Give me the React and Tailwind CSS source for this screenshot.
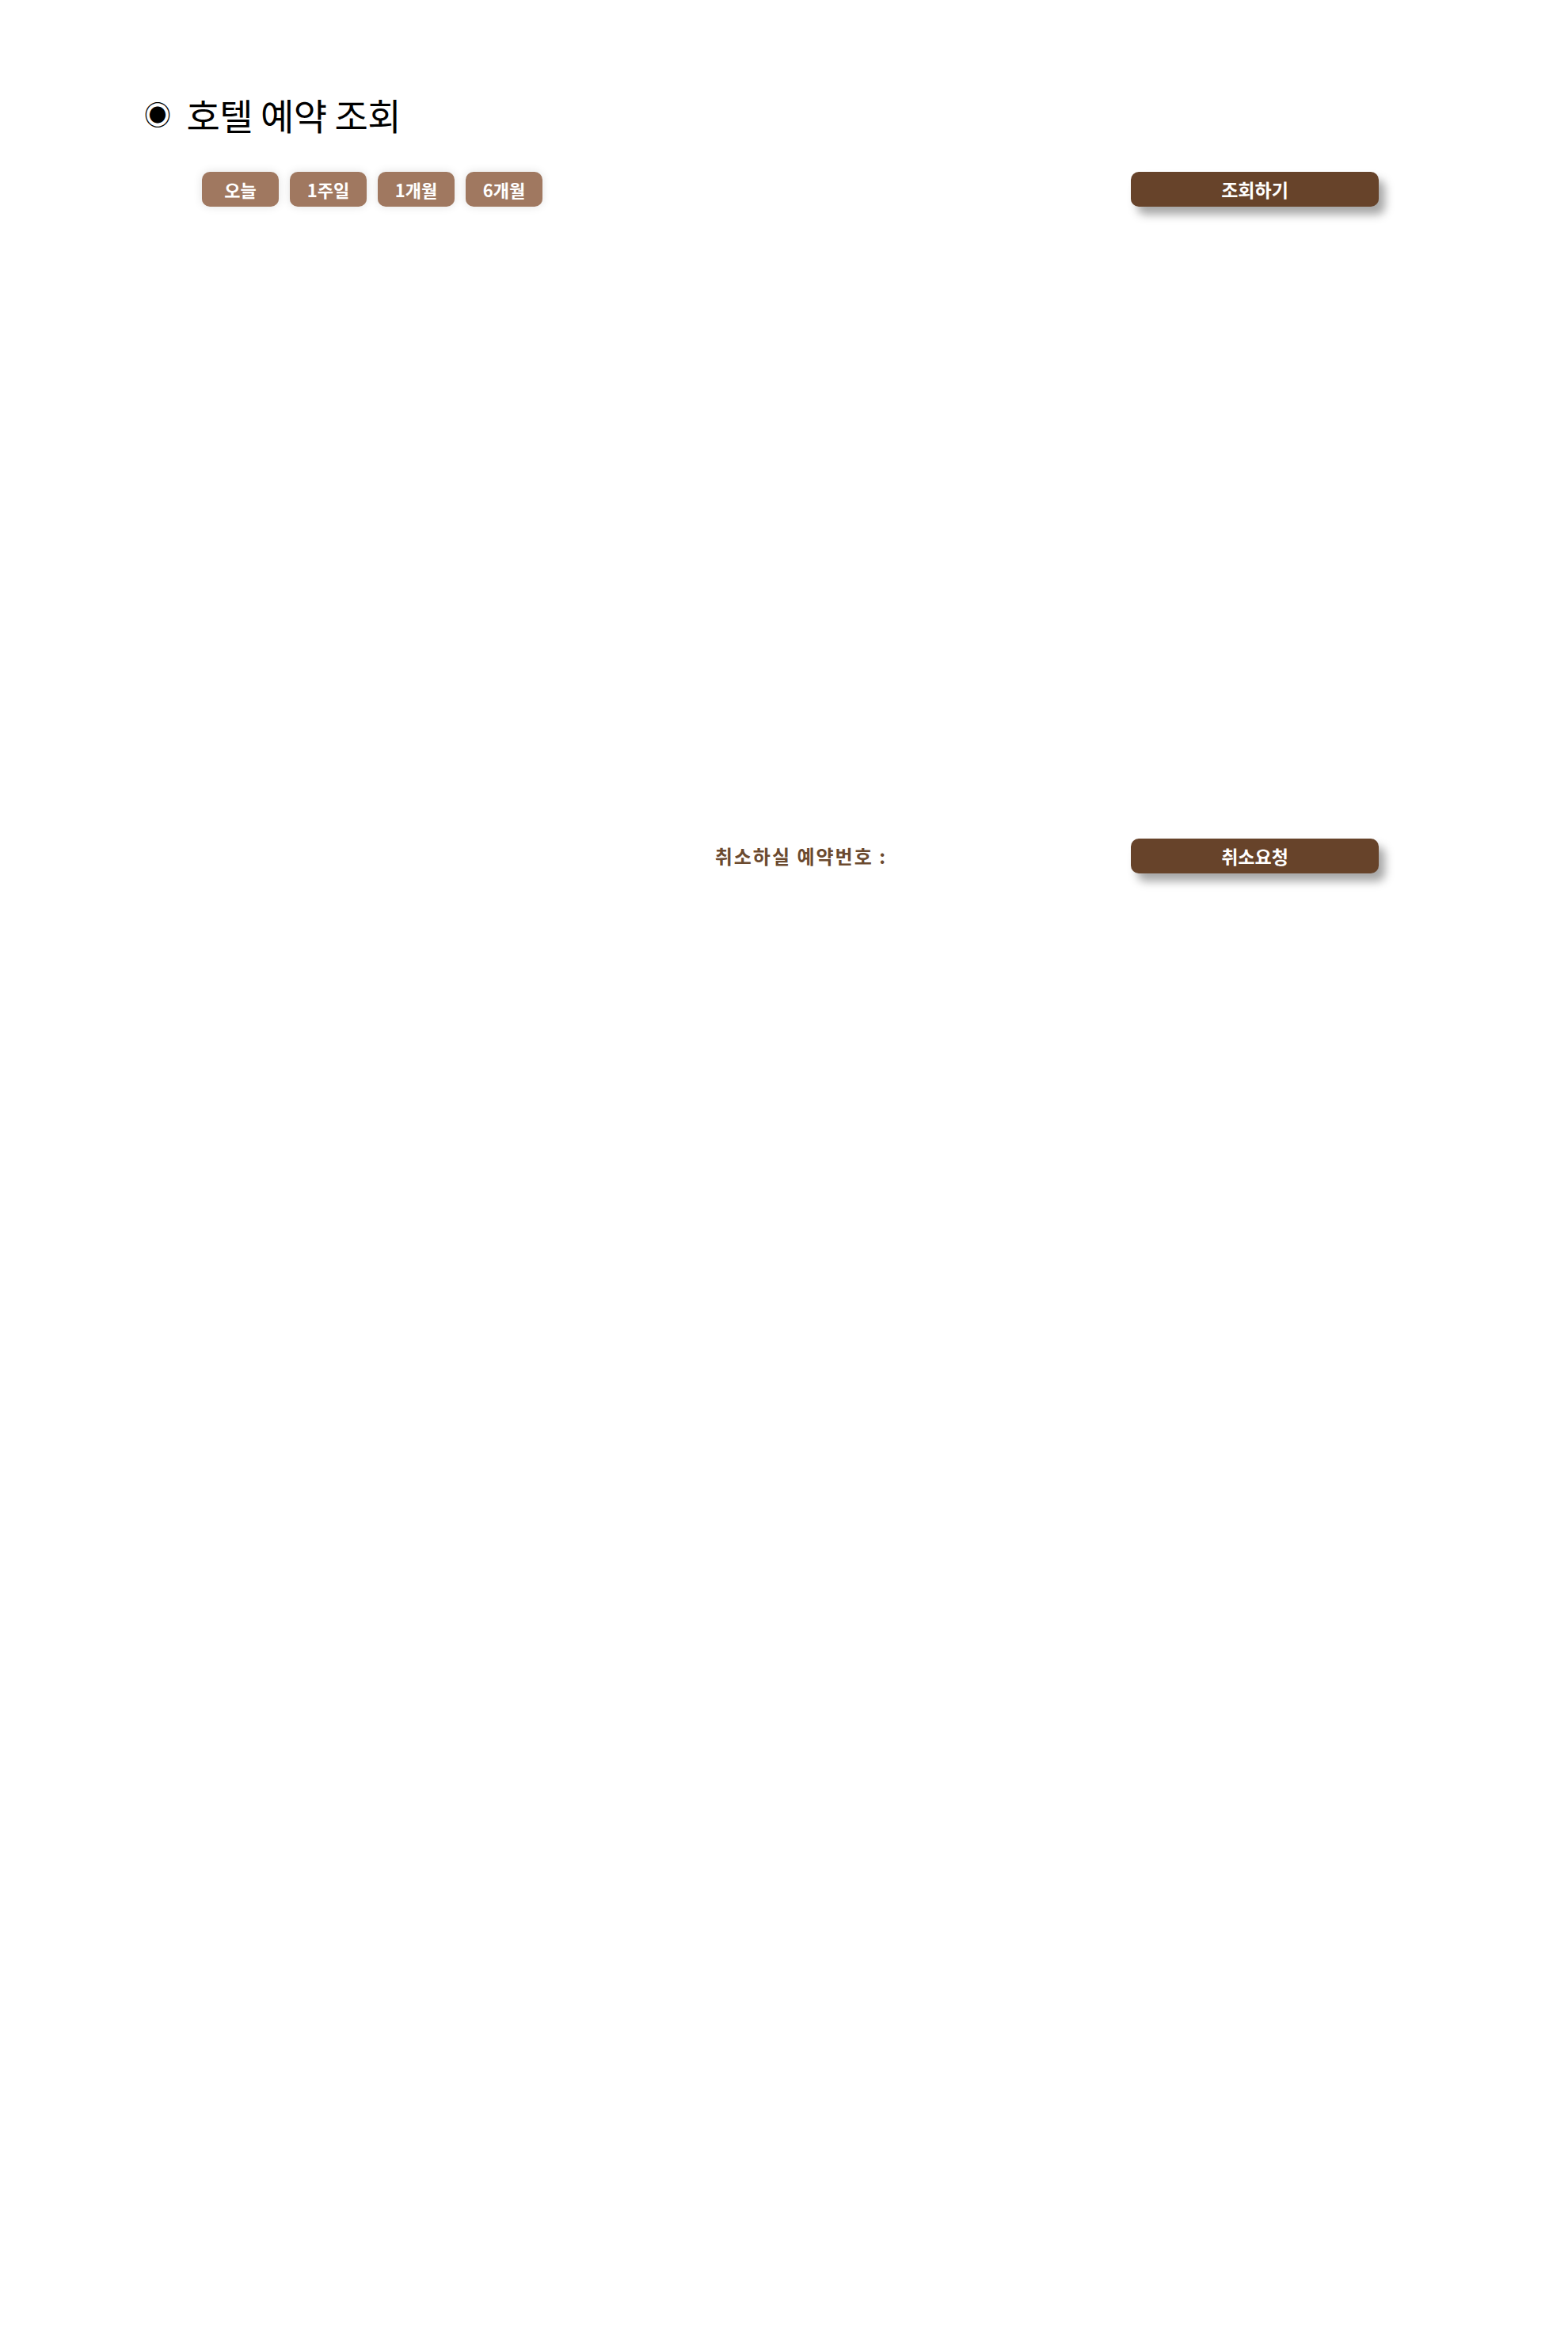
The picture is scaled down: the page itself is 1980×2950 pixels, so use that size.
import React, { useState } from 'react';

const ranges = ['오늘', '1주일', '1개월', '6개월'];

function App() {
  const [range, setRange] = useState('오늘');
  const [bookingNo, setBookingNo] = useState('');

  return (
    <div className="min-h-[2950px] bg-white font-['Noto_Sans_CJK_KR','Noto_Sans',sans-serif] text-black">
      {/* Title */}
      <h1 className="flex items-center pl-[182px] pt-[112px] text-[46px] font-normal leading-[64px] tracking-[-0.5px]">
        <span className="mr-[20px] text-[34px] leading-none">◉</span>
        호텔 예약 조회
      </h1>

      {/* Search row */}
      <div className="mt-[41px] flex w-[1741px] items-center justify-between pl-[255px]">
        <div className="flex gap-[14px]">
          {ranges.map((r) => (
            <button
              key={r}
              onClick={() => setRange(r)}
              className="h-[44px] w-[97px] rounded-[10px] bg-[#a07860] text-[22px] font-bold text-white shadow-[0_0_12px_rgba(0,0,0,0.12)]"
              aria-pressed={range === r}
            >
              {r}
            </button>
          ))}
        </div>
        <button className="h-[44px] w-[313px] rounded-[10px] bg-[#67432a] text-[23px] font-bold text-white shadow-[8px_10px_12px_rgba(0,0,0,0.35)]">
          조회하기
        </button>
      </div>

      {/* Results (empty) */}
      <div className="h-[798px]" />

      {/* Cancel row */}
      <div className="flex w-[1741px] items-center justify-end">
        <label className="text-[24px] font-bold tracking-[2px] text-[#6b4a2f]">
          취소하실 예약번호 :
        </label>
        <input
          value={bookingNo}
          onChange={(e) => setBookingNo(e.target.value)}
          className="mx-[20px] w-[268px] bg-transparent outline-none"
        />
        <button className="h-[44px] w-[313px] rounded-[10px] bg-[#67432a] text-[23px] font-bold text-white shadow-[8px_10px_12px_rgba(0,0,0,0.35)]">
          취소요청
        </button>
      </div>
    </div>
  );
}

export default App;
